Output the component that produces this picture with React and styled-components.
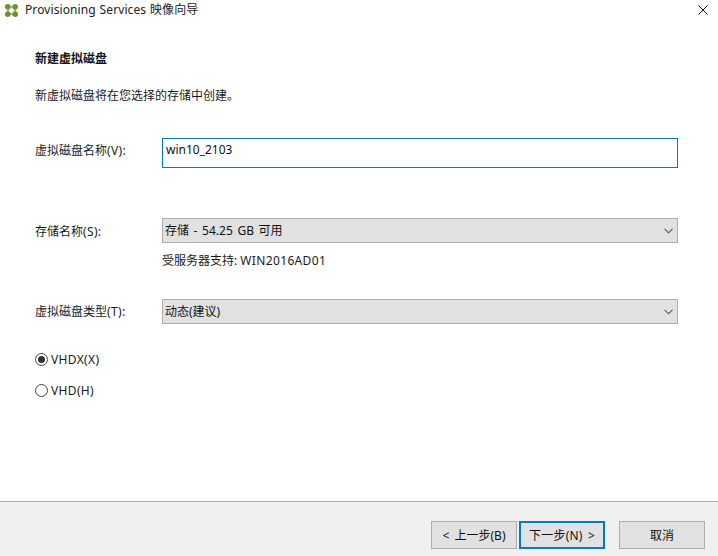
import React from 'react';
import styled, { createGlobalStyle } from 'styled-components';

const GlobalStyle = createGlobalStyle`
  html, body {
    margin: 0;
    padding: 0;
    background: #fff;
  }
  body {
    font-family: "Noto Sans", "Noto Sans CJK SC", sans-serif;
    font-size: 12px;
    color: #1a1a1a;
  }
`;

const Window = styled.div`
  width: 718px;
  height: 556px;
  display: flex;
  flex-direction: column;
  overflow: hidden;
  background: #fff;
`;

const TitleBar = styled.div`
  height: 20px;
  display: flex;
  align-items: center;
  padding: 0 10px 0 5px;
  gap: 7px;
  flex: none;
`;

const TitleText = styled.span`
  flex: 1;
  line-height: 20px;
  color: #222;
  letter-spacing: 0.1px;
  word-spacing: 0.6px;
`;

const Body = styled.div`
  flex: 1;
  padding: 30px 40px 0 35px;
  display: flex;
  flex-direction: column;
`;

const Heading = styled.div`
  font-weight: 700;
  line-height: 18px;
  height: 18px;
  color: #111;
`;

const Intro = styled.div`
  margin-top: 19px;
  line-height: 18px;
  height: 18px;
`;

const Row = styled.div`
  display: grid;
  grid-template-columns: 127px 516px;
  align-items: center;
  margin-top: ${(p) => p.$top}px;
`;

const Label = styled.label`
  line-height: 18px;
  padding-top: ${(p) => p.$down || 0}px;
  padding-bottom: ${(p) => p.$up || 0}px;
`;

const Latin = styled.span`
  letter-spacing: 0.35px;
`;

const NameInput = styled.input`
  box-sizing: border-box;
  width: 516px;
  height: 30px;
  border: 1px solid #0078d7;
  outline: none;
  padding: 0 3px 7px;
  font: inherit;
  color: #111;
  background: #fff;
`;

const Select = styled.div`
  box-sizing: border-box;
  width: 516px;
  height: 25px;
  border: 1px solid #adadad;
  background: #e1e1e1;
  display: flex;
  align-items: center;
  justify-content: space-between;
  padding: 0 4px 0 2px;
  line-height: 18px;
  color: #111;
  word-spacing: 1.5px;
`;

const Hint = styled.div`
  margin: 9px 0 0 127px;
  line-height: 18px;
  height: 18px;
`;

const RadioGroup = styled.div`
  margin-top: 26px;
  display: flex;
  flex-direction: column;
  gap: 13px;
`;

const RadioRow = styled.div`
  display: flex;
  align-items: center;
  gap: 3px;
  height: 18px;
`;

const RadioMark = styled.span`
  box-sizing: border-box;
  width: 13px;
  height: 13px;
  border: 1px solid #444;
  border-radius: 50%;
  display: flex;
  align-items: center;
  justify-content: center;
  background: #fff;

  &::after {
    content: '';
    display: ${(p) => (p.$checked ? 'block' : 'none')};
    width: 7px;
    height: 7px;
    border-radius: 50%;
    background: #333;
  }
`;

const Footer = styled.div`
  flex: none;
  height: 55px;
  box-sizing: border-box;
  border-top: 1px solid #a9a9a9;
  background: #f0f0f0;
  display: flex;
  align-items: flex-start;
  padding: 19px 13px 0 431px;
`;

const Button = styled.button`
  box-sizing: border-box;
  width: 86px;
  height: 28px;
  padding: 0 0 1px;
  margin-left: ${(p) => p.$gap || 0}px;
  background: #e1e1e1;
  border: ${(p) => (p.$primary ? '2px solid #0078d7' : '1px solid #adadad')};
  font: inherit;
  color: #111;
  white-space: pre;
  word-spacing: 2px;
  letter-spacing: ${(p) => (p.$primary ? '0.2px' : '0')};
`;

function ProductIcon() {
  return (
    <svg width="13" height="13" viewBox="0 0 13 13">
      <path d="M3 3h7v7H3z" stroke="#a4bb62" strokeWidth="2.4" fill="none" />
      <g fill="#6f8f34">
        <circle cx="2.7" cy="2.7" r="2.7" />
        <circle cx="10.3" cy="2.7" r="2.7" />
        <circle cx="2.7" cy="10.3" r="2.7" />
        <circle cx="10.3" cy="10.3" r="2.7" />
      </g>
    </svg>
  );
}

function CloseIcon() {
  return (
    <svg width="10" height="10" viewBox="0 0 10 10">
      <path d="M0.5 0.5l9 9M9.5 0.5l-9 9" stroke="#111" strokeWidth="1" fill="none" />
    </svg>
  );
}

function Chevron() {
  return (
    <svg width="9" height="6" viewBox="0 0 9 6">
      <path d="M0.5 0.8l4 4 4-4" stroke="#555" strokeWidth="1.1" fill="none" />
    </svg>
  );
}

export default function App() {
  return (
    <Window>
      <GlobalStyle />
      <TitleBar>
        <ProductIcon />
        <TitleText>Provisioning Services 映像向导</TitleText>
        <CloseIcon />
      </TitleBar>

      <Body>
        <Heading>新建虚拟磁盘</Heading>
        <Intro>新虚拟磁盘将在您选择的存储中创建。</Intro>

        <Row $top={33}>
          <Label $up={4}>虚拟磁盘名称<Latin>(V):</Latin></Label>
          <NameInput defaultValue="win10_2103" />
        </Row>

        <Row $top={50}>
          <Label $down={2}>存储名称<Latin>(S):</Latin></Label>
          <Select>
            <span>存储 - 54.25 GB 可用</span>
            <Chevron />
          </Select>
        </Row>
        <Hint>受服务器支持: <Latin>WIN2016AD01</Latin></Hint>

        <Row $top={29}>
          <Label>虚拟磁盘类型<Latin>(T):</Latin></Label>
          <Select>
            <span>动态(建议)</span>
            <Chevron />
          </Select>
        </Row>

        <RadioGroup>
          <RadioRow>
            <RadioMark $checked />
            <Latin>VHDX(X)</Latin>
          </RadioRow>
          <RadioRow>
            <RadioMark />
            <Latin>VHD(H)</Latin>
          </RadioRow>
        </RadioGroup>
      </Body>

      <Footer>
        <Button>{'< 上一步(B)'}</Button>
        <Button $primary $gap={2}>{'下一步(N) >'}</Button>
        <Button $gap={14}>取消</Button>
      </Footer>
    </Window>
  );
}
